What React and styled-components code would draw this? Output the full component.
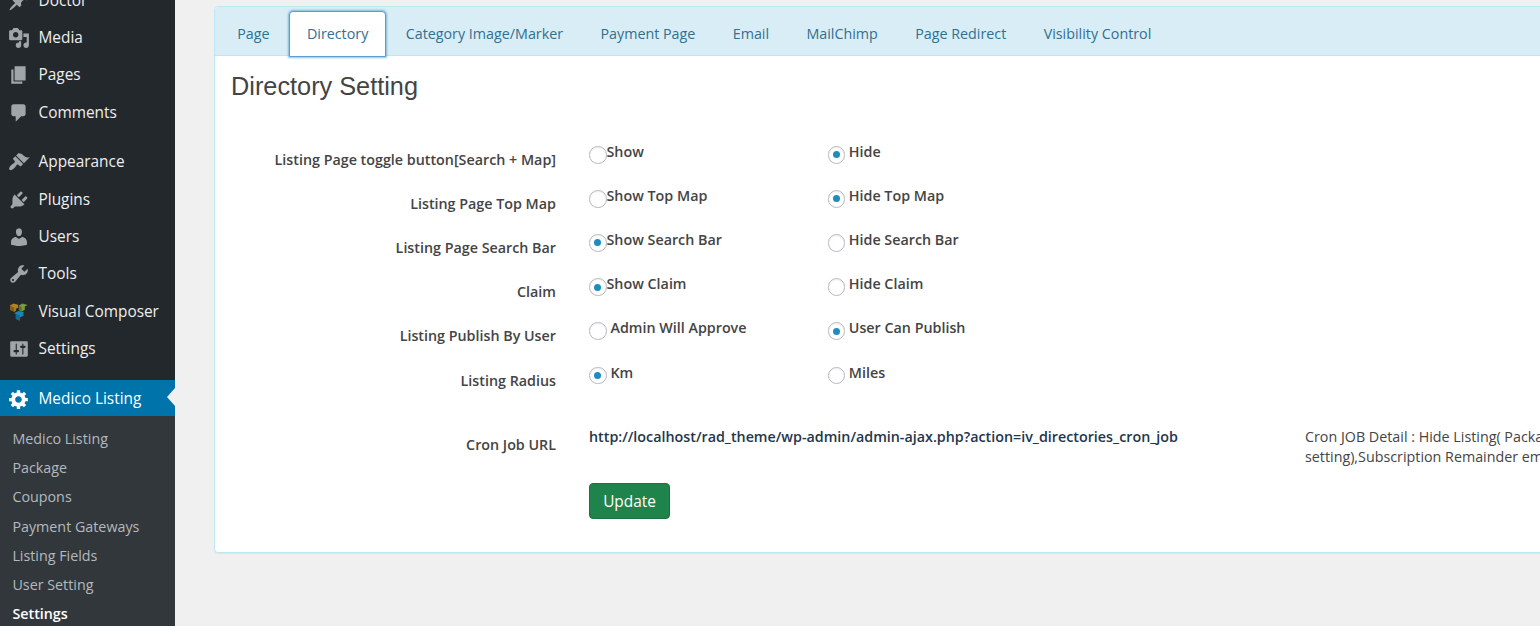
import React from "react";
import styled, { createGlobalStyle, css } from "styled-components";

const GlobalStyle = createGlobalStyle`
  * { box-sizing: border-box; }
  html, body { margin: 0; padding: 0; overflow: hidden; background: #f0f0f0; }
  body { font-family: "Open Sans", sans-serif; font-size: 14.3px; color: #444; }
`;

const Page = styled.div`
  display: flex;
  width: 100vw;
  height: 100vh;
  overflow: hidden;
`;

const Sidebar = styled.nav`
  flex: 0 0 175px;
  height: 100%;
  overflow: hidden;
  background: #23282d;
  display: flex;
  flex-direction: column;
`;

const MenuList = styled.div`
  flex: none;
  margin-top: -18.87px;
`;

const MenuItem = styled.div`
  position: relative;
  display: flex;
  align-items: center;
  height: ${(p) => (p.$active ? "36px" : "37.33px")};
  margin-top: ${(p) => (p.$active ? "13.5px" : p.$spaced ? "12.1px" : "0")};
  padding-top: 2px;
  padding-left: 8px;
  color: ${(p) => (p.$active ? "#fff" : "#eee")};
  background: ${(p) => (p.$active ? "#0073aa" : "transparent")};
  ${(p) =>
    p.$active &&
    css`
      &::after {
        content: "";
        position: absolute;
        right: 0;
        top: 8px;
        border: 9px solid transparent;
        border-left-width: 0;
        border-right: 8px solid #f0f0f0;
      }
    `}
`;

const MenuIcon = styled.svg`
  flex: none;
  width: 22px;
  height: 22px;
  margin-right: 8.5px;
  fill: ${(p) => (p.$active ? "#fff" : "#a0a5aa")};
`;

const MenuLabel = styled.span`
  font-size: 15.4px;
  line-height: 20px;
  white-space: nowrap;
`;

const Submenu = styled.div`
  flex: 1 0 auto;
  padding-top: 8px;
  background: #32373c;
`;

const SubmenuItem = styled.div`
  height: 29.2px;
  padding-left: 12.4px;
  font-size: 14.3px;
  line-height: 29.2px;
  white-space: nowrap;
  color: ${(p) => (p.$current ? "#fff" : "#b4b9be")};
  font-weight: ${(p) => (p.$current ? 600 : 400)};
`;

const Main = styled.main`
  flex: 1;
  min-width: 0;
  padding: 6px 0 0 39px;
`;

const Panel = styled.section`
  width: 1380px;
  height: 547px;
  border: 1px solid #bce8f1;
  border-radius: 4px;
  background: #fff;
  box-shadow: 0 1px 1px rgba(0, 0, 0, 0.05);
`;

const TabBar = styled.div`
  display: flex;
  height: 49px;
  padding: 4px 0 0 4.5px;
  background: #d9edf7;
  border-bottom: 1px solid #bce8f1;
  border-radius: 3px 3px 0 0;
`;

const Tab = styled.div`
  flex: none;
  height: 46px;
  margin-right: 2px;
  padding: 0 16.7px;
  border: 1px solid transparent;
  border-radius: 4px 4px 0 0;
  color: #31708f;
  line-height: 43px;
  white-space: nowrap;
  ${(p) =>
    p.$active &&
    css`
      background: #fff;
      border-color: #5b9dd9;
      box-shadow: 0 0 2px 1px rgba(30, 140, 190, 0.5);
    `}
`;

const Title = styled.h2`
  margin: 0;
  padding: 15px 0 0 16px;
  font: 400 25.3px/30px "Liberation Sans", Arial, sans-serif;
  color: #444;
`;

const Form = styled.div`
  padding: 41px 0 0 16px;
`;

const FormRow = styled.div`
  display: grid;
  grid-template-columns: 325px 205.6px 444.4px 1fr;
  column-gap: 33px;
  height: ${(p) => p.$height || 44.12}px;
  line-height: 20px;
`;

const FieldLabel = styled.div`
  padding-top: 8px;
  text-align: right;
  font-weight: 600;
`;

const Option = styled.label`
  display: flex;
  align-items: flex-start;
  font-weight: 600;
  white-space: nowrap;
`;

const Radio = styled.span`
  flex: none;
  display: grid;
  place-items: center;
  width: 17.5px;
  height: 17.5px;
  margin: 4px ${(p) => p.$gap}px 0 0;
  border: 1px solid #b4b9be;
  border-radius: 50%;
  background: #fff;
  box-shadow: inset 0 1px 2px rgba(0, 0, 0, 0.07);
  &::after {
    content: "";
    width: 7px;
    height: 7px;
    border-radius: 50%;
    background: ${(p) => (p.$checked ? "#1e8cbe" : "transparent")};
  }
`;

const CronUrl = styled.div`
  grid-column: 2 / 4;
  font-weight: 600;
  color: #23364b;
  white-space: nowrap;
`;

const CronNote = styled.div`
  white-space: nowrap;
`;

const UpdateButton = styled.button`
  display: block;
  width: 81px;
  height: 36px;
  margin: 0 0 0 358px;
  padding: 2px 0 0;
  border: 1px solid #1b713f;
  border-radius: 4px;
  background: #1f844b;
  color: #fff;
  font: 400 15.4px/32px "Open Sans", sans-serif;
`;

const icons = {
  pin: "M10.44 3.02l1.82-1.82 6.36 6.35-1.83 1.82c-1.05-.68-2.48-.57-3.41.36l-.75.75c-.92.93-1.04 2.35-.35 3.41l-1.83 1.82-2.41-2.41-2.8 2.79c-.42.42-3.38 2.71-3.8 2.29s1.86-3.39 2.28-3.81l2.79-2.79L4.1 9.36l1.83-1.82c1.05.69 2.48.57 3.4-.36l.75-.75c.93-.92 1.05-2.35.36-3.41z",
  media: "M13 11V4c0-.55-.45-1-1-1h-1.67L9 1H5L3.67 3H2c-.55 0-1 .45-1 1v7c0 .55.45 1 1 1h10c.55 0 1-.45 1-1zM7 4.5c1.38 0 2.5 1.12 2.5 2.5S8.38 9.5 7 9.5 4.5 8.38 4.5 7 5.62 4.5 7 4.5zM14 6h5v10.5c0 1.38-1.12 2.5-2.5 2.5S14 17.88 14 16.5s1.12-2.5 2.5-2.5c.17 0 .34.02.5.05V9h-3V6zm-4 8.05V13h2v3.5c0 1.38-1.12 2.5-2.5 2.5S7 17.88 7 16.5 8.12 14 9.5 14c.17 0 .34.02.5.05z",
  page: "M6 15V2h10v13H6zm-1 1h8v2H3V5h2v11z",
  comment: "M5 2h9c1.1 0 2 .9 2 2v7c0 1.1-.9 2-2 2h-2l-5 5v-5H5c-1.1 0-2-.9-2-2V4c0-1.1.9-2 2-2z",
  brush: "M14.48 11.06L7.41 3.99l1.5-1.5c.5-.56 2.3-.47 3.51.32 1.21.8 1.43 1.28 2.91 2.1 1.18.64 2.45 1.26 4.45.85zm-.71.71L6.7 4.7 4.93 6.47c-.39.39-.39 1.02 0 1.41l1.06 1.06c.39.39.39 1.03 0 1.42-.6.6-1.43 1.11-2.21 1.69-.35.26-.7.53-1.01.84C1.43 14.23.4 16.08 1.4 17.07c.99 1 2.84-.03 4.18-1.36.31-.31.58-.66.85-1.02.57-.78 1.08-1.61 1.69-2.21.39-.39 1.02-.39 1.41 0l1.06 1.06c.39.39 1.02.39 1.41 0z",
  plug: "M13.11 4.36L9.87 7.6 8 5.73l3.24-3.24c.35-.34 1.05-.2 1.56.32.52.51.66 1.21.31 1.55zm-8 1.77l.91-1.12 9.01 9.01-1.19.84c-.71.71-2.63 1.16-3.82 1.16H6.14L4.9 17.26c-.59.59-1.54.59-2.12 0-.59-.58-.59-1.53 0-2.12l1.24-1.24v-3.88c0-1.13.4-3.19 1.09-3.89zm7.26 3.97l3.24-3.24c.34-.35 1.04-.21 1.55.31.52.51.66 1.21.31 1.55l-3.24 3.25z",
  user: "M10 9.25c-2.27 0-2.73-3.44-2.73-3.44C7 4.02 7.82 2 9.97 2c2.16 0 2.98 2.02 2.71 3.81 0 0-.41 3.44-2.68 3.44zm0 2.57L12.72 10c2.39 0 4.52 2.33 4.52 4.53v2.49s-3.65 1.13-7.24 1.13c-3.65 0-7.24-1.13-7.24-1.13v-2.49c0-2.25 1.94-4.48 4.47-4.48z",
  wrench: "M16.68 9.77c-1.34 1.34-3.3 1.67-4.95.99l-5.41 6.52c-.99.99-2.59.99-3.58 0s-.99-2.59 0-3.57l6.52-5.42c-.68-1.65-.35-3.61.99-4.95 1.28-1.28 3.12-1.62 4.72-1.06l-2.89 2.89 2.82 2.82 2.86-2.87c.53 1.58.18 3.39-1.08 4.65zM3.81 16.21c.4.39 1.04.39 1.43 0 .4-.4.4-1.04 0-1.43-.39-.4-1.03-.4-1.43 0-.39.39-.39 1.03 0 1.43z",
  sliders: "M18 16V4c0-.55-.45-1-1-1H3c-.55 0-1 .45-1 1v12c0 .55.45 1 1 1h14c.55 0 1-.45 1-1zM8 11h1c.55 0 1 .45 1 1s-.45 1-1 1H8v1.5c0 .28-.22.5-.5.5s-.5-.22-.5-.5V13H6c-.55 0-1-.45-1-1s.45-1 1-1h1V5.5c0-.28.22-.5.5-.5s.5.22.5.5V11zm5-2h-1c-.55 0-1-.45-1-1s.45-1 1-1h1V5.5c0-.28.22-.5.5-.5s.5.22.5.5V7h1c.55 0 1 .45 1 1s-.45 1-1 1h-1v5.5c0 .28-.22.5-.5.5s-.5-.22-.5-.5V9z",
  gear: "M18 12h-2.18c-.17.7-.44 1.35-.81 1.93l1.54 1.54-2.1 2.1-1.54-1.54c-.58.36-1.23.63-1.91.79V19H8v-2.18c-.68-.16-1.33-.43-1.91-.79l-1.54 1.54-2.12-2.12 1.54-1.54c-.36-.58-.63-1.23-.79-1.91H1V9.03h2.17c.16-.7.44-1.35.8-1.94L2.43 5.55l2.1-2.1 1.54 1.54c.58-.37 1.24-.64 1.93-.81V2h3v2.18c.68.16 1.33.43 1.91.79l1.54-1.54 2.12 2.12-1.54 1.54c.36.59.64 1.24.8 1.94H18V12zm-8.5 1.5c1.66 0 3-1.34 3-3s-1.34-3-3-3-3 1.34-3 3 1.34 3 3 3z",
};

const ComposerMark = () => (
  <>
    <path fill="#b5811c" d="M1.8 4 5 2.2l4.2 1.3v2.6L7.2 7v1.9L5.8 9.7 1.8 8z" />
    <path fill="#82601c" d="M1.8 4.2 5.6 6v3.7L1.8 8z" />
    <path fill="#7b9b3c" d="M9.9 4.1 13.1 2.2l4.8 1.4-2.6 1.4v3L12.5 9.6 9.9 8.1z" />
    <path fill="#59752b" d="M9.9 4.2 12.5 5.5v4.1L9.9 8.1z" />
    <path fill="#1b86b4" d="M5.8 10.8 9.7 9l4.4 1v3.4l-3.4 1.6v3L7.1 16.2v-4.4z" />
    <path fill="#126a92" d="M7.1 11.8 10.7 13v5L7.1 16.2z" />
  </>
);

const menu = [
  { label: "Doctor", icon: "pin" },
  { label: "Media", icon: "media" },
  { label: "Pages", icon: "page" },
  { label: "Comments", icon: "comment" },
  { label: "Appearance", icon: "brush", spaced: true },
  { label: "Plugins", icon: "plug" },
  { label: "Users", icon: "user" },
  { label: "Tools", icon: "wrench" },
  { label: "Visual Composer", icon: "composer" },
  { label: "Settings", icon: "sliders" },
  { label: "Medico Listing", icon: "gear", active: true },
];

const submenu = [
  "Medico Listing",
  "Package",
  "Coupons",
  "Payment Gateways",
  "Listing Fields",
  "User Setting",
  "Settings",
];

const tabs = [
  "Page",
  "Directory",
  "Category Image/Marker",
  "Payment Page",
  "Email",
  "MailChimp",
  "Page Redirect",
  "Visibility Control",
];

const fields = [
  { label: "Listing Page toggle button[Search + Map]", options: ["Show", "Hide"], checked: 1, gap: 0 },
  { label: "Listing Page Top Map", options: ["Show Top Map", "Hide Top Map"], checked: 1, gap: 0 },
  { label: "Listing Page Search Bar", options: ["Show Search Bar", "Hide Search Bar"], checked: 0, gap: 0 },
  { label: "Claim", options: ["Show Claim", "Hide Claim"], checked: 0, gap: 0 },
  { label: "Listing Publish By User", options: ["Admin Will Approve", "User Can Publish"], checked: 1, gap: 4 },
  { label: "Listing Radius", options: ["Km", "Miles"], checked: 0, gap: 4, height: 64.2 },
];

export default function App() {
  return (
    <Page>
      <GlobalStyle />
      <Sidebar>
        <MenuList>
          {menu.map((m) => (
            <MenuItem key={m.label} $spaced={m.spaced} $active={m.active}>
              <MenuIcon viewBox="0 0 20 20" $active={m.active}>
                {m.icon === "composer" ? <ComposerMark /> : <path d={icons[m.icon]} />}
              </MenuIcon>
              <MenuLabel>{m.label}</MenuLabel>
            </MenuItem>
          ))}
        </MenuList>
        <Submenu>
          {submenu.map((s) => (
            <SubmenuItem key={s} $current={s === "Settings"}>{s}</SubmenuItem>
          ))}
        </Submenu>
      </Sidebar>
      <Main>
        <Panel>
          <TabBar>
            {tabs.map((t) => (
              <Tab key={t} $active={t === "Directory"}>{t}</Tab>
            ))}
          </TabBar>
          <Title>Directory Setting</Title>
          <Form>
            {fields.map((f) => (
              <FormRow key={f.label} $height={f.height}>
                <FieldLabel>{f.label}</FieldLabel>
                {f.options.map((o, i) => (
                  <Option key={o}>
                    <Radio $checked={f.checked === i} $gap={i === 0 ? f.gap : 3.7} />
                    {o}
                  </Option>
                ))}
              </FormRow>
            ))}
            <FormRow $height={56.2}>
              <FieldLabel>Cron Job URL</FieldLabel>
              <CronUrl>http://localhost/rad_theme/wp-admin/admin-ajax.php?action=iv_directories_cron_job</CronUrl>
              <CronNote>
                Cron JOB Detail : Hide Listing( Package
                <br />
                setting),Subscription Remainder email
              </CronNote>
            </FormRow>
            <UpdateButton>Update</UpdateButton>
          </Form>
        </Panel>
      </Main>
    </Page>
  );
}
